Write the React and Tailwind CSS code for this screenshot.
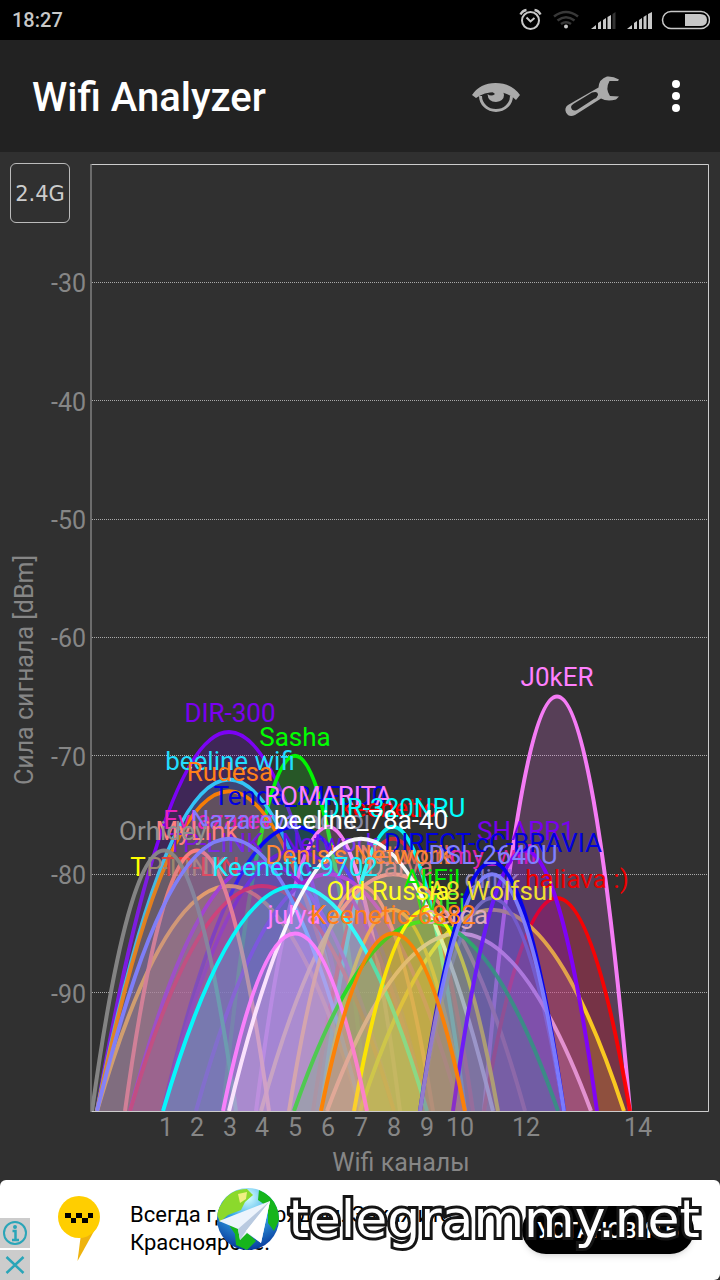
const BASE = 1111;
const level = (dbm) => BASE - (dbm + 100) * 11.84;
const channelX = (ch) => Math.round(131 + ch * 32.8);

// Curves: [channel, signal in dBm, half width, colour], painted from back to front
const backCurves = [
  [13, -65, 73, '#ff80ff'],
  [3, -68, 132, '#7f00ff'],
  [5, -70, 72, '#00ff00'],
  [3, -72, 132, '#33ccff'],
  [3, -73, 132, '#ff8000'],
  [5, -76, 132, '#0000ff'],
  [6, -76, 72, '#ff80ff'],
  [8, -77, 80, '#ff0000'],
  [8, -76, 72, '#00ffff'],
  [3, -81, 132, '#ffb040'],
  [4, -79, 132, '#9922dd'],
  [5, -78, 132, '#6622dd'],
  [4, -81, 132, '#dd2255'],
  [6, -80, 132, '#a020d0'],
  [8, -80, 132, '#ee8877'],
];

const frontCurves = [
  [2, -78, 72, '#ff7f7f'],
  [1, -78, 72, '#888888'],
  [3, -77, 132, '#8080ff'],
  [13, -82, 73, '#ff0000'],
  [11, -83, 132, '#ffd020'],
  [11, -82, 72, '#9080a8'],
  [8, -83, 72, '#ee9922'],
  [7, -81, 72, '#ee8866'],
  [5, -81, 132, '#00ffff'],
  [7, -77, 132, '#ffffff'],
  [10, -85, 132, '#ffb8cc'],
  [9, -84, 132, '#22dd22'],
  [9, -83, 72, '#ffff00'],
  [12, -78, 72, '#7f00ff'],
  [11, -79, 72, '#0000ee'],
  [11, -80, 72, '#8080ff'],
  [5, -85, 72, '#ff80ff'],
  [8, -85, 72, '#ff8000'],
];

// Names: [text, centre x, baseline, colour]
const backNames = [
  ['Tenda_24F0D0', 300, 805, '#0000e0'],
  ['keenetic', 388, 817, '#ff0000'],
  ['Evlazarev', 218, 829, '#e822b8'],
  ['Nazareva', 245, 829, '#8878ff'],
  ['adnoi', 338, 829, '#8888a0'],
  ['TP-LINK', 215, 852, '#7a18dd'],
  ['Network', 330, 852, '#6a10e8'],
  ['MyLink', 197, 840, '#ff8080'],
  ['T', 138, 876, '#ffff00'],
  ['P-LINK', 186, 876, '#a08868'],
  ['TP-LIN', 200, 876, '#ee3333'],
  ['Network', 408, 864, '#dd6655'],
  ['my_wifi', 493, 864, '#dd22aa'],
  ['Darya', 400, 876, '#cc7777'],
  ['dlink', 492, 888, '#a090b0'],
];

const frontNames = [
  ['DIR-300', 230, 722, '#7a00f0'],
  ['J0kER', 557, 686, '#ff80ff'],
  ['Sasha', 295, 746, '#00ff00'],
  ['beeline wifi', 230, 770, '#22ddff'],
  ['Rudesa', 230, 781, '#ff8019'],
  ['ROMARITA', 328, 805, '#ff80ff'],
  ['DIR-320NRU', 394, 817, '#00ffff'],
  ['Orhidey', 163, 840, '#909090'],
  ['SHARR1', 526, 840, '#7a00f0'],
  ['DIRECT-cC-BRAVIA', 493, 852, '#0000dd'],
  ["Denis's Network", 358, 864, '#ff8833'],
  ['DSL-2640U', 493, 864, '#8080ff'],
  ['AliFil', 432, 888, '#00ee00'],
  ['haliava :)', 577, 888, '#ee0000'],
  ['Keenetic-9702', 295, 876, '#22eeff'],
  ['WiFi', 440, 912, '#33dd22'],
  ['A8 Wolfsui', 491, 900, '#eedd33'],
  ['Old Russia', 388, 900, '#ffff22'],
  ['serga', 456, 924, '#ddaabb'],
  ['julya', 294, 924, '#ff80ff'],
  ['Keenetic-6882', 393, 924, '#ff8019'],
  ['beeline_78a-40', 361, 829, '#ffffff'],
];

const levels = [-30, -40, -50, -60, -70, -80, -90];
const channels = [
  [1, 166], [2, 197], [3, 230], [4, 262], [5, 295], [6, 328],
  [7, 361], [8, 394], [9, 427], [10, 460], [12, 526], [14, 638],
];

function StatusBar() {
  return (
    <div className="flex h-10 items-center justify-between bg-black pl-3 pr-[10px] text-[#c8c8c8]">
      <span className="text-xl font-medium">18:27</span>
      <svg className="h-10 w-[200px]" viewBox="510 0 200 40" fill="none" stroke="currentColor" aria-hidden="true">
        <circle cx="530.5" cy="20.500" r="8.500" strokeWidth="2" />
        <path d="M526.500 17.500l4 4 4-3.500" strokeWidth="2" />
        <path d="M520.500 14.500q2-4 6-4.500M534.500 10q4 .5 6 4.500" strokeWidth="2.500" />
        <g stroke="#383838" strokeWidth="2.600">
          <path d="M554 16.500q12-9 24 0M557.500 20.500q8.500-6.500 17 0M561 24q5-3.500 10 0" />
        </g>
        <circle cx="566" cy="26.500" r="2" fill="currentColor" stroke="none" />
        <g fill="currentColor" stroke="none">
          <path d="M591 29l5-4v4zM598 29v-6l3-2v8zM603 29v-9l3-2v11zM607.500 29V17l3.500-2v14z" />
          <path d="M612.500 29V14l3-2v17z" fill="#333" />
          <path d="M627 29l5-4v4zM634 29v-6l3-2v8zM639 29v-9l3-2v11zM643.500 29V17l3-2v14zM648 29V14l4-2v17z" />
        </g>
        <rect x="662.500" y="11.500" width="47" height="17" rx="8.500" strokeWidth="1.500" />
        <path d="M685 14h15q7 0 7 6t-7 6h-15z" fill="currentColor" stroke="none" />
      </svg>
    </div>
  );
}

function Header() {
  return (
    <header className="flex h-28 items-center bg-[#222222] pl-8 pr-[26px]">
      <h1 className="flex-1 pt-1 text-[40px] font-medium leading-none text-white">Wifi Analyzer</h1>
      <button type="button" aria-label="Вид" className="text-[#aaaaaa]">
        <svg className="h-12 w-[52px]" viewBox="470 72 52 48">
          <path d="M480.500 96a15.500 14.500 0 0 0 31 0" fill="none" stroke="currentColor" strokeWidth="3" />
          <path d="M472 95Q480 83 495.500 83Q511 83 520 95L516 100Q508 92 495.500 92Q484 92 476 98Z" fill="currentColor" />
          <path d="M490 90L495 94Q491 97 487.500 94Q488 102 496 102Q504 101 504 95Q504 92 502 90Z" fill="currentColor" />
        </svg>
      </button>
      <button type="button" aria-label="Настройки" className="ml-10 text-[#aaaaaa]">
        <svg className="h-12 w-[60px]" viewBox="562 72 60 48">
          <path
            fill="currentColor"
            fillRule="evenodd"
            d="M619 79.500Q613 76 607 76.500Q599 79 598.500 87.500L568 105Q564 108 566 112.500Q569 118 575 115L601 98.500Q607 102 616 99.500L619 96.500L610 96Q605 89 609.500 81L618 81ZM592 92.500Q598 90.500 598 95Q597 98 594 99L577 110Q572 112 571 107Q571 105 574 103.500Z"
          />
        </svg>
      </button>
      <button type="button" aria-label="Ещё" className="ml-9 text-white">
        <svg className="h-12 w-9" viewBox="658 72 36 48" fill="currentColor">
          <circle cx="676" cy="84" r="4" />
          <circle cx="676" cy="96" r="4" />
          <circle cx="676" cy="108" r="4" />
        </svg>
      </button>
    </header>
  );
}

function Curves({ items }) {
  return (
    <g clipPath="url(#plot)" strokeWidth="4">
      {items.map(([ch, dbm, half, color], i) => {
        const x = channelX(ch);
        const d = `M${x - half} ${BASE}Q${x} ${2 * level(dbm) - BASE} ${x + half} ${BASE}`;
        return <path key={i} d={d} fill={color} fillOpacity="0.19" stroke={color} strokeOpacity="0.95" />;
      })}
    </g>
  );
}

function Names({ items }) {
  return (
    <g textAnchor="middle">
      {items.map(([text, x, y, color]) => (
        <text key={text + x} x={x} y={y} fill={color}>{text}</text>
      ))}
    </g>
  );
}

function SignalChart() {
  return (
    <svg className="block w-full text-[26px]" viewBox="0 152 720 1028" role="img" aria-label="Сила сигнала по каналам Wifi">
      <clipPath id="plot"><rect x="91" y="164" width="617" height="947" /></clipPath>
      <g stroke="#aaaaaa" strokeDasharray="1 1">
        {levels.map((dbm) => (
          <line key={dbm} x1="92" x2="708" y1={Math.floor(level(dbm)) + 0.5} y2={Math.floor(level(dbm)) + 0.5} />
        ))}
      </g>
      <Curves items={backCurves} />
      <Names items={backNames} />
      <Curves items={frontCurves} />
      <path d="M91 164.500H708.500V1111.500H91" fill="none" stroke="#cccccc" />
      <path d="M91 164V1112" stroke="#808080" strokeWidth="1.500" />
      <Names items={frontNames} />
      <g fill="#868686" className="text-[25px]">
        <g textAnchor="end">
          {levels.map((dbm) => <text key={dbm} x="86" y={Math.round(level(dbm)) + 10}>{dbm}</text>)}
        </g>
        <g textAnchor="middle">
          {channels.map(([ch, x]) => <text key={ch} x={x} y="1136">{ch}</text>)}
          <text x="401" y="1171">Wifi каналы</text>
          <text transform="translate(33 670) rotate(-90)">Сила сигнала [dBm]</text>
        </g>
      </g>
    </svg>
  );
}

function Banner() {
  return (
    <footer className="relative flex h-[100px] rounded-md bg-white text-black">
      <div className="flex w-[30px] flex-col justify-end gap-0.5">
        <button type="button" aria-label="О рекламе" className="h-[30px] bg-[#cccccc]">
          <svg viewBox="0 0 30 30" fill="none" stroke="#2aa5b8" strokeWidth="2">
            <circle cx="15" cy="15" r="11" />
            <path d="M12.500 13h3v9M12 22h7" strokeWidth="2.500" />
            <circle cx="15" cy="9" r="1" />
          </svg>
        </button>
        <button type="button" aria-label="Закрыть" className="h-[30px] bg-[#cccccc]">
          <svg viewBox="0 0 30 30" fill="none" stroke="#2aa5b8" strokeWidth="2.500">
            <path d="M6.500 7l17 16M23.500 7l-17 16" />
          </svg>
        </button>
      </div>
      <svg className="ml-7 mt-4 h-[66px] w-[42px]" viewBox="58 16 42 66" aria-hidden="true">
        <path d="M81 54L77.500 81L98 44Z" fill="#eeb30e" />
        <circle cx="79" cy="37" r="21" fill="#ffce00" />
        <path d="M65 33h6v5h5v-5h6v5h6v-5h5v5h-5v5h-6v-5h-6v5h-5v-5h-6z" fill="#000" />
      </svg>
      <p className="ml-[30px] mt-[21px] flex-1 whitespace-nowrap text-[22px] leading-7">
        Всегда где-то рядом. Закажите<br />Красноярске.
      </p>
      <button type="button" className="mr-[26px] mt-[26px] h-12 w-[172px] shrink-0 rounded-full bg-black text-[22px] font-medium text-white shadow-md">
        УСТАНОВИТЬ
      </button>
      <div className="absolute right-5 top-[7px] flex items-center gap-2">
        <svg className="size-16" viewBox="0 0 64 64" aria-hidden="true">
          <defs>
            <radialGradient id="sea" cx="50%" cy="15%" r="85%">
              <stop offset="0" stopColor="#d8ffff" />
              <stop offset="0.45" stopColor="#36a8e8" />
              <stop offset="1" stopColor="#073a9c" />
            </radialGradient>
            <clipPath id="globe"><circle cx="32" cy="32" r="31" /></clipPath>
          </defs>
          <circle cx="32" cy="32" r="31" fill="url(#sea)" />
          <g clipPath="url(#globe)" fill="#16b51c">
            <path d="M6 16Q14 2 31 2L37 8L29 15L25 23L12 28L4 35L0 25Z" fill="#8bd92c" />
            <path d="M43 3Q62 11 64 31L58 44L52 36L52 20L42 13Z" />
            <path d="M13 38L29 43L40 54L31 63L20 58L19 47Z" />
            <path d="M22 7L31 5L30 12L24 16Z" fill="#f0ef83" />
          </g>
          <path d="M3 34L54 14L45 56L31 46L24 53L22 42Z" fill="#edf4fc" />
          <path d="M22 42L54 14L30 44L24 53Z" fill="#b9cae0" />
          <path d="M30 44L54 14L45 56Z" fill="#ffffff" />
        </svg>
        <span className="font-['DejaVu_Sans',sans-serif] text-[52px] leading-[56px] text-white [-webkit-text-stroke:6px_#151515] [paint-order:stroke_fill]">
          telegrammy.net
        </span>
      </div>
    </footer>
  );
}

export default function App() {
  return (
    <div className="flex min-h-screen flex-col bg-[#303030] font-['Roboto',sans-serif]">
      <StatusBar />
      <Header />
      <main className="relative flex-1">
        <SignalChart />
        <button
          type="button"
          className="absolute left-[10px] top-[11px] size-[60px] rounded-md border border-[#bbbbbb] pt-1 font-['DejaVu_Sans',sans-serif] text-[21px] text-[#cccccc]"
        >
          2.4G
        </button>
      </main>
      <Banner />
    </div>
  );
}
